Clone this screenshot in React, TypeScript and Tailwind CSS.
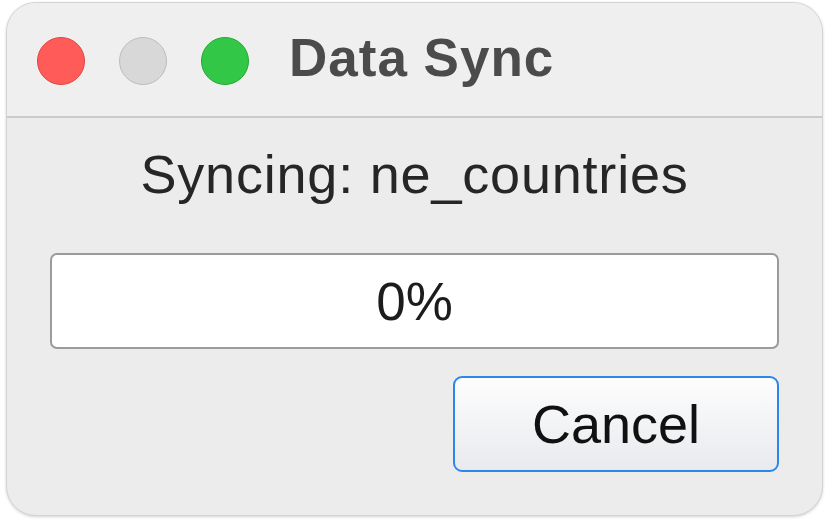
import React from 'react';

const font = { fontFamily: '"Liberation Sans", Arial, sans-serif' };

const TrafficLight: React.FC<{ className: string }> = ({ className }) => (
  <div className={`w-[48px] h-[48px] rounded-full border ${className}`} />
);

export default function App() {
  return (
    <div className="w-[828px] h-[520px] bg-white pt-[2px] pl-[6px]" style={font}>
      <div className="w-[817px] h-[514px] rounded-[30px] bg-[#ececec] border border-[#d4d4d4] shadow-[0_1px_3px_rgba(0,0,0,0.18)] overflow-hidden flex flex-col">
        {/* title bar */}
        <div className="h-[115px] shrink-0 bg-[#efefef] border-b-2 border-[#cacaca] flex items-center pl-[30px] pt-[2px]">
          <div className="flex items-center gap-[34px]">
            <TrafficLight className="bg-[#ff5b58] border-[#e2453f]" />
            <TrafficLight className="bg-[#d8d8d8] border-[#bdbdbd]" />
            <TrafficLight className="bg-[#33c748] border-[#20ac30]" />
          </div>
          <div className="ml-[40px] mb-[6px] text-[53px] leading-none font-bold text-[#4b4b4b] tracking-[1px]">
            Data Sync
          </div>
        </div>

        {/* body */}
        <div className="flex-1 flex flex-col px-[43px] pt-[29px]">
          <div className="h-[54px] text-[54px] leading-none text-center text-[#262626] tracking-[0.8px]">
            Syncing: ne_countries
          </div>

          <div className="mt-[52px] h-[96px] rounded-[7px] border-2 border-[#9b9b9b] bg-white flex items-center justify-center">
            <span className="text-[53px] leading-none text-[#1c1c1c]">0%</span>
          </div>

          <div className="mt-[27px] flex justify-end">
            <button className="w-[326px] h-[96px] rounded-[9px] border-2 border-[#2b87ec] bg-gradient-to-b from-[#fdfdfd] to-[#e8eaee] flex items-center justify-center text-[54px] leading-none text-[#111111]">
              Cancel
            </button>
          </div>
        </div>
      </div>
    </div>
  );
}
